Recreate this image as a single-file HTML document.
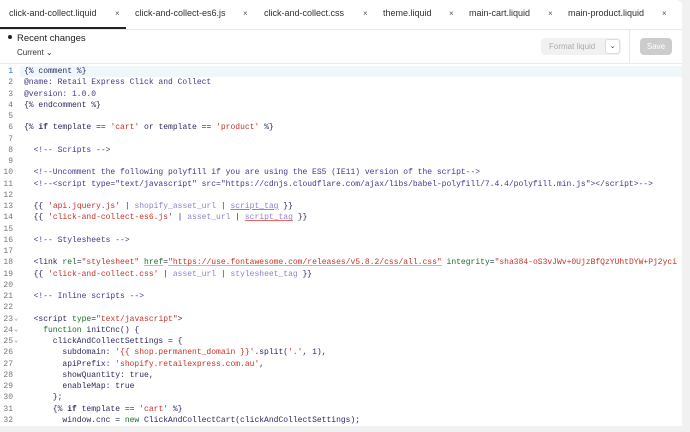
<!DOCTYPE html>
<html><head><style>
body{margin:0;width:690px;height:432px;background:#f1f1f1;overflow:hidden;font-family:"Liberation Sans",sans-serif;}
.panel{position:absolute;left:0;top:0;width:682px;height:426px;background:#fff;border-top-right-radius:6px;overflow:hidden;}
.tabs{position:absolute;top:0;left:0;right:0;height:29px;border-bottom:1px solid #e6e6e6;font-size:9px;color:#303030;}
.tab{position:absolute;top:8px;white-space:nowrap}
.x{position:absolute;top:9px;font-size:8px;color:#555}
.act{position:absolute;left:0;top:27px;width:126px;height:2px;background:#222}
.rc{position:absolute;left:8px;top:33px;font-size:9.5px;color:#222}
.rc:before{content:"";display:inline-block;width:4px;height:4px;border-radius:50%;background:#222;margin-right:5px;vertical-align:middle;position:relative;top:-1px}
.cur{position:absolute;left:17px;top:48px;font-size:8px;color:#333}
.fmt{position:absolute;left:541px;top:38px;width:80px;height:17px;border-radius:4px;background:#f1f1f1;font-size:8px;color:#aaa}
.fmt span{position:absolute;left:8px;top:4px}
.fmt i{position:absolute;right:1px;top:1px;width:15px;height:15px;background:#fff;border-radius:3px;border:1px solid #ddd;box-sizing:border-box;font-style:normal;font-size:7px;color:#333;text-align:center;line-height:13px}
.div{position:absolute;left:629px;top:30px;width:1px;height:33px;background:#e6e6e6}
.save{position:absolute;left:640px;top:38px;width:32px;height:17px;border-radius:4px;background:#ccc;color:#fff;font-size:8px;text-align:center;line-height:17px}
.hr{position:absolute;left:0;right:0;top:63px;height:1px;background:#ebebeb}
.hl{position:absolute;left:20px;right:0;top:66px;height:11px;background:#f0f7fb}
.code{position:absolute;left:0;top:66px;font-family:"Liberation Mono",monospace;font-size:8px;line-height:11.25px;color:#2e2b5e;white-space:pre}
.ln{position:absolute;left:0;width:13px;text-align:right;color:#777}
.l{position:absolute;left:24px}
.c{color:#45388a}.s{color:#c4342b}.k{color:#1f6b2e}.f{color:#8f83c9}.u{text-decoration:underline;text-decoration-color:#e66}.o{text-decoration:underline;text-decoration-color:#f0b070}
.fold{position:absolute;left:14px;color:#888;font-size:7px}
</style></head><body>
<div class="panel">
<div class="tabs">
<span class="tab" style="left:9px">click-and-collect.liquid</span><span class="x" style="left:115px">×</span>
<span class="tab" style="left:135px">click-and-collect-es6.js</span><span class="x" style="left:243px">×</span>
<span class="tab" style="left:264px">click-and-collect.css</span><span class="x" style="left:363px">×</span>
<span class="tab" style="left:383px">theme.liquid</span><span class="x" style="left:449px">×</span>
<span class="tab" style="left:469px">main-cart.liquid</span><span class="x" style="left:548px">×</span>
<span class="tab" style="left:568px">main-product.liquid</span><span class="x" style="left:662px">×</span>
<div class="act"></div>
</div>
<div class="rc">Recent changes</div>
<div class="cur">Current &#8964;</div>
<div class="fmt"><span>Format liquid</span><i>&#8964;</i></div>
<div class="div"></div>
<div class="save">Save</div>
<div class="hr"></div>
<div class="hl"></div>
<div class="code">
<div class="ln" style="top:0;color:#2a6fd1">1</div><div class="l" style="top:0">{% comment %}</div>
<div class="ln" style="top:11.25px">2</div><div class="l c" style="top:11.25px">@name: Retail Express Click and Collect</div>
<div class="ln" style="top:22.5px">3</div><div class="l c" style="top:22.5px">@version: 1.0.0</div>
<div class="ln" style="top:33.75px">4</div><div class="l" style="top:33.75px">{% endcomment %}</div>
<div class="ln" style="top:45px">5</div>
<div class="ln" style="top:56.25px">6</div><div class="l" style="top:56.25px">{% <b>if</b> template == <span class="s">'cart'</span> or template == <span class="s">'product'</span> %}</div>
<div class="ln" style="top:67.5px">7</div>
<div class="ln" style="top:78.75px">8</div><div class="l c" style="top:78.75px">  &lt;!-- Scripts --&gt;</div>
<div class="ln" style="top:90px">9</div>
<div class="ln" style="top:101.25px">10</div><div class="l c" style="top:101.25px">  &lt;!--Uncomment the following polyfill if you are using the ES5 (IE11) version of the script--&gt;</div>
<div class="ln" style="top:112.5px">11</div><div class="l c" style="top:112.5px">  &lt;!--&lt;script type="text/javascript" src="https://cdnjs.cloudflare.com/ajax/libs/babel-polyfill/7.4.4/polyfill.min.js"&gt;&lt;/script&gt;--&gt;</div>
<div class="ln" style="top:123.75px">12</div>
<div class="ln" style="top:135px">13</div><div class="l" style="top:135px">  {{ <span class="s">'api.jquery.js'</span> | <span class="f">shopify_asset_url</span> | <span class="f u">script_tag</span> }}</div>
<div class="ln" style="top:146.25px">14</div><div class="l" style="top:146.25px">  {{ <span class="s">'click-and-collect-es6.js'</span> | <span class="f">asset_url</span> | <span class="f u">script_tag</span> }}</div>
<div class="ln" style="top:157.5px">15</div>
<div class="ln" style="top:168.75px">16</div><div class="l c" style="top:168.75px">  &lt;!-- Stylesheets --&gt;</div>
<div class="ln" style="top:180px">17</div>
<div class="ln" style="top:191.25px">18</div><div class="l" style="top:191.25px">  &lt;link <span class="k">rel</span>=<span class="s">"stylesheet"</span> <span class="k o">href</span>=<span class="s o">"https://use.fontawesome.com/releases/v5.8.2/css/all.css"</span> <span class="k">integrity</span>=<span class="s">"sha384-oS3vJWv+0UjzBfQzYUhtDYW+Pj2yci</span></div>
<div class="ln" style="top:202.5px">19</div><div class="l" style="top:202.5px">  {{ <span class="s">'click-and-collect.css'</span> | <span class="f">asset_url</span> | <span class="f">stylesheet_tag</span> }}</div>
<div class="ln" style="top:213.75px">20</div>
<div class="ln" style="top:225px">21</div><div class="l c" style="top:225px">  &lt;!-- Inline scripts --&gt;</div>
<div class="ln" style="top:236.25px">22</div>
<div class="ln" style="top:247.5px">23</div><span class="fold" style="top:247.5px">&#8964;</span><div class="l" style="top:247.5px">  &lt;script <span class="k">type</span>=<span class="s">"text/javascript"</span>&gt;</div>
<div class="ln" style="top:258.75px">24</div><span class="fold" style="top:258.75px">&#8964;</span><div class="l" style="top:258.75px">    <span class="k">function</span> initCnc() {</div>
<div class="ln" style="top:270px">25</div><span class="fold" style="top:270px">&#8964;</span><div class="l" style="top:270px">      clickAndCollectSettings = {</div>
<div class="ln" style="top:281.25px">26</div><div class="l" style="top:281.25px">        subdomain: <span class="s">'{{ shop.permanent_domain }}'</span>.split(<span class="s">'.'</span>, 1),</div>
<div class="ln" style="top:292.5px">27</div><div class="l" style="top:292.5px">        apiPrefix: <span class="s">'shopify.retailexpress.com.au'</span>,</div>
<div class="ln" style="top:303.75px">28</div><div class="l" style="top:303.75px">        showQuantity: true,</div>
<div class="ln" style="top:315px">29</div><div class="l" style="top:315px">        enableMap: true</div>
<div class="ln" style="top:326.25px">30</div><div class="l" style="top:326.25px">      };</div>
<div class="ln" style="top:337.5px">31</div><div class="l" style="top:337.5px">      {% <b>if</b> template == <span class="s">'cart'</span> %}</div>
<div class="ln" style="top:348.75px">32</div><div class="l" style="top:348.75px">        window.cnc = <span class="k">new</span> ClickAndCollectCart(clickAndCollectSettings);</div>
</div>
</div>
</body></html>
